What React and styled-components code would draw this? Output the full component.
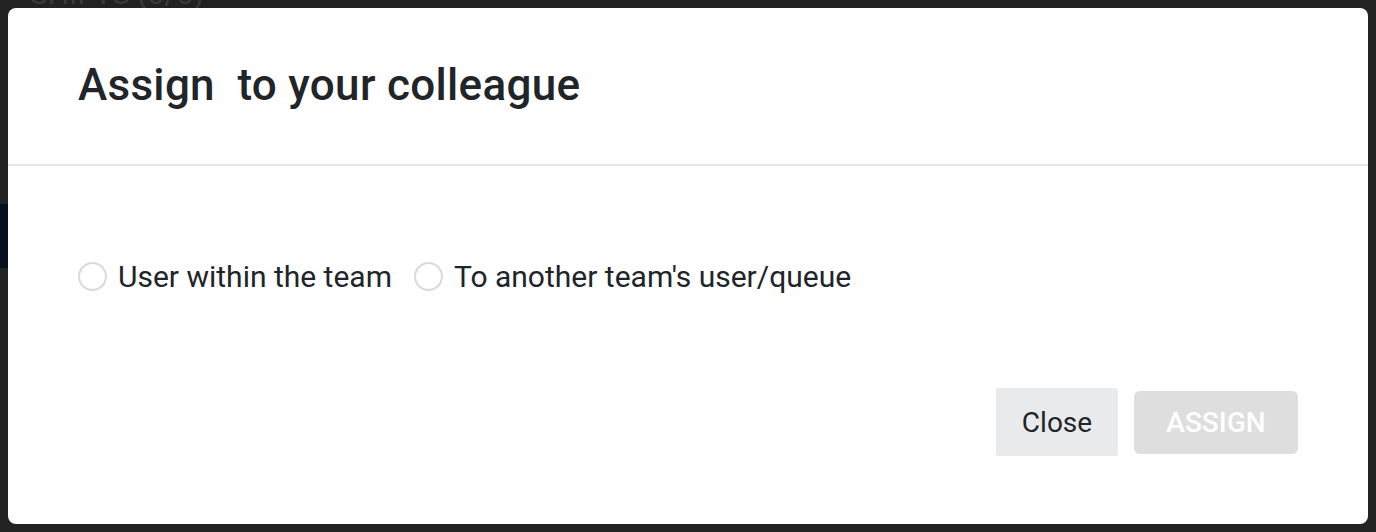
import React, { useState } from 'react';
import styled, { createGlobalStyle } from 'styled-components';

const GlobalStyle = createGlobalStyle`
  html, body {
    margin: 0;
    padding: 0;
    background: #222222;
    font-family: Roboto, 'Liberation Sans', sans-serif;
  }
  * { box-sizing: border-box; }
`;

export default function App() {
  const [target, setTarget] = useState(null);

  return (
    <>
      <GlobalStyle />
      <Backdrop>
        <BehindText>SHIFTS (0/0)</BehindText>
        <BehindBlock />
        <Modal>
          <Header>
            <Title>Assign&nbsp; to your colleague</Title>
          </Header>
          <Body>
            <Options>
              <Option onClick={() => setTarget('team')}>
                <Circle $checked={target === 'team'} />
                User within the team
              </Option>
              <Option onClick={() => setTarget('other')}>
                <Circle $checked={target === 'other'} />
                To another team's user/queue
              </Option>
            </Options>
          </Body>
          <Footer>
            <CloseButton>Close</CloseButton>
            <AssignButton disabled={!target}>ASSIGN</AssignButton>
          </Footer>
        </Modal>
      </Backdrop>
    </>
  );
}

const Backdrop = styled.div`
  position: relative;
  width: 1376px;
  height: 532px;
  padding: 8px;
  overflow: hidden;
  background: #222222;
`;

const BehindText = styled.div`
  position: absolute;
  top: -24px;
  left: 30px;
  font-size: 30px;
  color: #3a3a3a;
`;

const BehindBlock = styled.div`
  position: absolute;
  top: 204px;
  left: 0;
  width: 8px;
  height: 64px;
  background: #06101e;
`;

const Modal = styled.div`
  position: relative;
  display: flex;
  flex-direction: column;
  width: 1360px;
  height: 516px;
  background: #ffffff;
  border-radius: 8px;
`;

const Header = styled.div`
  display: flex;
  align-items: center;
  height: 158px;
  padding: 0 70px 2px;
  border-bottom: 2px solid #e3e3e3;
`;

const Title = styled.h2`
  margin: 0;
  font-size: 44px;
  font-weight: 500;
  letter-spacing: 0.3px;
  color: #212529;
`;

const Body = styled.div`
  padding: 90px 70px 0;
`;

const Options = styled.div`
  display: flex;
  align-items: center;
  gap: 22px;
  height: 40px;
`;

const Option = styled.label`
  display: flex;
  align-items: center;
  gap: 11px;
  font-size: 30px;
  color: #212529;
  cursor: pointer;
`;

const Circle = styled.span`
  display: inline-block;
  width: 29px;
  height: 29px;
  border-radius: 50%;
  border: 2px solid ${(p) => (p.$checked ? '#0d6efd' : '#d9d9d9')};
  background: ${(p) => (p.$checked ? 'radial-gradient(#0d6efd 40%, #fff 45%)' : '#fff')};
`;

const Footer = styled.div`
  display: flex;
  justify-content: flex-end;
  align-items: center;
  gap: 16px;
  margin-top: 92px;
  padding: 0 70px;
`;

const CloseButton = styled.button`
  height: 68px;
  width: 122px;
  padding: 0;
  border: none;
  border-radius: 3px;
  background: #e9eaec;
  color: #212529;
  font-family: inherit;
  font-size: 28px;
  cursor: pointer;
`;

const AssignButton = styled.button`
  height: 63px;
  width: 164px;
  padding: 0;
  border: none;
  border-radius: 6px;
  background: #dedede;
  color: #ffffff;
  font-family: inherit;
  font-size: 28px;
  font-weight: 500;
  cursor: pointer;
`;
